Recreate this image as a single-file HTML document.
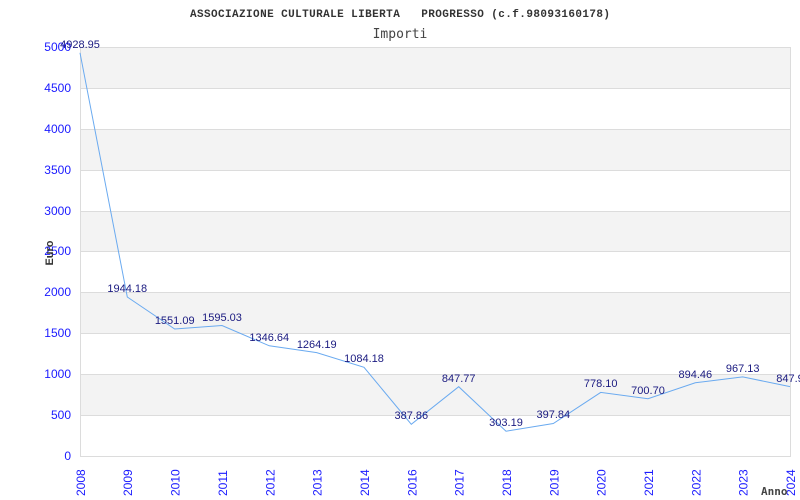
<!DOCTYPE html>
<html><head><style>body{margin:0;background:#fff}svg{display:block}</style></head><body>
<svg width="800" height="500" xmlns="http://www.w3.org/2000/svg" font-family="Liberation Sans, sans-serif">
<text x="190" y="17" textLength="420" lengthAdjust="spacing" font-family="Liberation Mono, monospace" font-size="11" font-weight="bold" fill="#333" style="white-space:pre" xml:space="preserve">ASSOCIAZIONE CULTURALE LIBERTA   PROGRESSO (c.f.98093160178)</text>
<text x="400" y="38" text-anchor="middle" font-family="DejaVu Sans Mono, monospace" font-size="13" fill="#444">Importi</text>
<g fill="#f3f3f3">
<rect x="80" y="47" width="710" height="41"/><rect x="80" y="129" width="710" height="41"/><rect x="80" y="211" width="710" height="40"/><rect x="80" y="292" width="710" height="41"/><rect x="80" y="374" width="710" height="41"/>
</g>
<g stroke="#dcdcdc" stroke-width="1">
<line x1="80" y1="47.5" x2="790" y2="47.5"/><line x1="80" y1="88.5" x2="790" y2="88.5"/><line x1="80" y1="129.5" x2="790" y2="129.5"/><line x1="80" y1="170.5" x2="790" y2="170.5"/><line x1="80" y1="211.5" x2="790" y2="211.5"/><line x1="80" y1="251.5" x2="790" y2="251.5"/><line x1="80" y1="292.5" x2="790" y2="292.5"/><line x1="80" y1="333.5" x2="790" y2="333.5"/><line x1="80" y1="374.5" x2="790" y2="374.5"/><line x1="80" y1="415.5" x2="790" y2="415.5"/><line x1="80" y1="456.5" x2="790" y2="456.5"/>
<line x1="80.5" y1="47" x2="80.5" y2="457"/><line x1="790.5" y1="47" x2="790.5" y2="457"/>
</g>
<g fill="#1a1aff" font-size="12" text-anchor="end">
<text x="71" y="51">5000</text><text x="71" y="92">4500</text><text x="71" y="133">4000</text><text x="71" y="174">3500</text><text x="71" y="215">3000</text><text x="71" y="255">2500</text><text x="71" y="296">2000</text><text x="71" y="337">1500</text><text x="71" y="378">1000</text><text x="71" y="419">500</text><text x="71" y="460">0</text>
</g>
<text x="53" y="253" font-size="11" font-weight="bold" fill="#333" text-anchor="middle" transform="rotate(-90 53 253)">Euro</text>
<g fill="#1a1aff" font-size="12">
<text transform="translate(85,496) rotate(-90)">2008</text>
<text transform="translate(132,496) rotate(-90)">2009</text>
<text transform="translate(179.7,496) rotate(-90)">2010</text>
<text transform="translate(227,496) rotate(-90)">2011</text>
<text transform="translate(274.3,496) rotate(-90)">2012</text>
<text transform="translate(321.7,496) rotate(-90)">2013</text>
<text transform="translate(369,496) rotate(-90)">2014</text>
<text transform="translate(416.3,496) rotate(-90)">2016</text>
<text transform="translate(463.7,496) rotate(-90)">2017</text>
<text transform="translate(511,496) rotate(-90)">2018</text>
<text transform="translate(558.3,496) rotate(-90)">2019</text>
<text transform="translate(605.7,496) rotate(-90)">2020</text>
<text transform="translate(653,496) rotate(-90)">2021</text>
<text transform="translate(700.3,496) rotate(-90)">2022</text>
<text transform="translate(747.7,496) rotate(-90)">2023</text>
<text transform="translate(795,496) rotate(-90)">2024</text>
</g>
<text x="761" y="495" font-family="DejaVu Sans Mono, monospace" font-size="11" font-weight="bold" fill="#444">Anno</text>
<polyline fill="none" stroke="#6aaaf0" stroke-width="1" points="80,52.8 127.3,297 174.7,329 222,325.5 269.3,345.8 316.7,352.6 364,367.3 411.3,424.3 458.7,386.7 506,431.2 553.3,423.5 600.7,392.4 648,398.7 695.3,382.8 742.7,376.9 790,386.6"/>
<g fill="#1a1a80" font-size="11" text-anchor="middle">
<text x="80" y="48">4928.95</text><text x="127.3" y="292">1944.18</text><text x="174.7" y="324">1551.09</text><text x="222" y="321">1595.03</text><text x="269.3" y="341">1346.64</text><text x="316.7" y="348">1264.19</text><text x="364" y="362">1084.18</text><text x="411.3" y="419">387.86</text><text x="458.7" y="382">847.77</text><text x="506" y="426">303.19</text><text x="553.3" y="418">397.84</text><text x="600.7" y="387">778.10</text><text x="648" y="394">700.70</text><text x="695.3" y="378">894.46</text><text x="742.7" y="372">967.13</text><text x="790" y="382">847.9</text>
</g>
</svg>
</body></html>
